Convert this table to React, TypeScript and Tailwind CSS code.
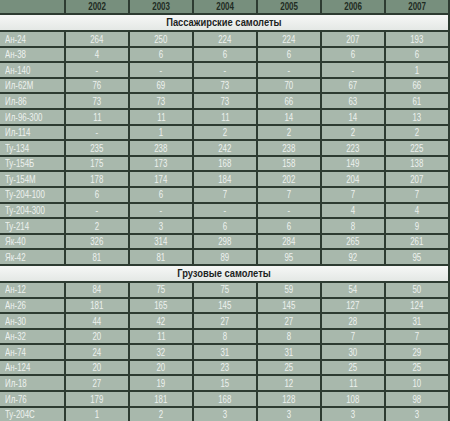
import React from "react";

const years = ["2002", "2003", "2004", "2005", "2006", "2007"];

const passenger: [string, string[]][] = [
  ["Ан-24", ["264", "250", "224", "224", "207", "193"]],
  ["Ан-38", ["4", "6", "6", "6", "6", "6"]],
  ["Ан-140", ["-", "-", "-", "-", "-", "1"]],
  ["Ил-62М", ["76", "69", "73", "70", "67", "66"]],
  ["Ил-86", ["73", "73", "73", "66", "63", "61"]],
  ["Ил-96-300", ["11", "11", "11", "14", "14", "13"]],
  ["Ил-114", ["-", "1", "2", "2", "2", "2"]],
  ["Ту-134", ["235", "238", "242", "238", "223", "225"]],
  ["Ту-154Б", ["175", "173", "168", "158", "149", "138"]],
  ["Ту-154М", ["178", "174", "184", "202", "204", "207"]],
  ["Ту-204-100", ["6", "6", "7", "7", "7", "7"]],
  ["Ту-204-300", ["-", "-", "-", "-", "4", "4"]],
  ["Ту-214", ["2", "3", "6", "6", "8", "9"]],
  ["Як-40", ["326", "314", "298", "284", "265", "261"]],
  ["Як-42", ["81", "81", "89", "95", "92", "95"]],
];

const cargo: [string, string[]][] = [
  ["Ан-12", ["84", "75", "75", "59", "54", "50"]],
  ["Ан-26", ["181", "165", "145", "145", "127", "124"]],
  ["Ан-30", ["44", "42", "27", "27", "28", "31"]],
  ["Ан-32", ["20", "11", "8", "8", "7", "7"]],
  ["Ан-74", ["24", "32", "31", "31", "30", "29"]],
  ["Ан-124", ["20", "20", "23", "25", "25", "25"]],
  ["Ил-18", ["27", "19", "15", "12", "11", "10"]],
  ["Ил-76", ["179", "181", "168", "128", "108", "98"]],
  ["Ту-204С", ["1", "2", "3", "3", "3", "3"]],
];

const font = {
  fontFamily: '"Liberation Sans", Arial, sans-serif',
};

function Rows({ rows }: { rows: [string, string[]][] }) {
  return (
    <>
      {rows.map(([name, vals]) => (
        <React.Fragment key={name}>
          <div className="h-[13.6px] bg-[#a8b8ac] flex items-center pl-[5px] text-[10.5px] leading-none text-[#edf1ee]">
            <span className="inline-block scale-x-[0.75] origin-left whitespace-nowrap">{name}</span>
          </div>
          {vals.map((v, i) => (
            <div
              key={i}
              className="h-[13.6px] bg-[#a8b8ac] flex items-center justify-center text-[10.5px] leading-none text-[#edf1ee]"
            >
              <span className="inline-block scale-x-[0.75]">{v}</span>
            </div>
          ))}
        </React.Fragment>
      ))}
    </>
  );
}

function Section({ title }: { title: string }) {
  return (
    <div className="col-span-7 h-[15px] bg-gradient-to-b from-[#f6f7f6] to-[#e4e8e5] flex items-center justify-center text-[11px] font-bold leading-none text-[#1c241e]">
      <span className="inline-block scale-x-[0.85] whitespace-nowrap">{title}</span>
    </div>
  );
}

export default function App() {
  return (
    <div className="w-[450px] h-[421px] overflow-hidden bg-[#2d3b31] pr-[2px]" style={font}>
      <div className="grid grid-cols-[64px_repeat(6,62px)] gap-[2px]">
        <div className="h-[13px] bg-[#778f7d]" />
        {years.map((y) => (
          <div
            key={y}
            className="h-[13px] bg-[#778f7d] flex items-center justify-center text-[10px] font-bold leading-none text-[#1f2c23]"
          >
            <span className="inline-block scale-x-[0.8]">{y}</span>
          </div>
        ))}
        <Section title="Пассажирские самолеты" />
        <Rows rows={passenger} />
        <Section title="Грузовые самолеты" />
        <Rows rows={cargo} />
      </div>
    </div>
  );
}
